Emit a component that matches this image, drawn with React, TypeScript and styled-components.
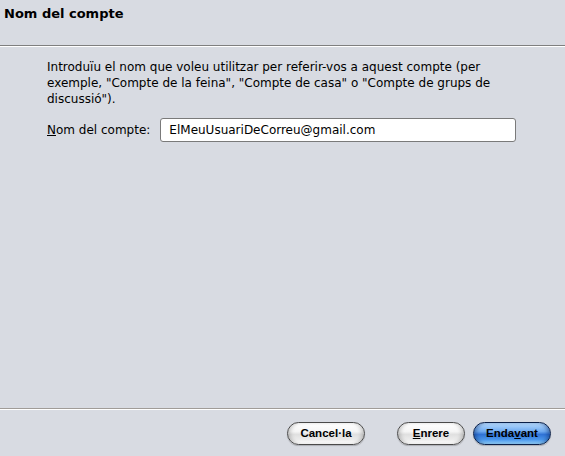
import React from "react";
import styled, { createGlobalStyle } from "styled-components";

const Global = createGlobalStyle`
  html, body { margin: 0; padding: 0; }
  body { background: #d8dbe2; font-family: "DejaVu Sans", "Verdana", sans-serif; }
`;

const Window = styled.div`
  width: 565px;
  height: 456px;
  display: flex;
  flex-direction: column;
  background: #d8dbe2;
  color: #000;
`;

const Header = styled.div`
  height: 46px;
  box-sizing: border-box;
  padding: 6px 0 0 4px;
  font-weight: bold;
  font-size: 13px;
  border-bottom: 1px solid #7f7f7f;
`;

const Sep = styled.div`
  height: 1px;
  background: #ffffff;
`;

const Body = styled.div`
  flex: 1;
  padding: 12px 47px 0 47px;
  font-size: 12px;
  line-height: 16px;
`;

const Para = styled.p`
  margin: 0;
`;

const Row = styled.div`
  display: flex;
  align-items: center;
  margin-top: 11px;
  gap: 10px;
`;

const Label = styled.label`
  font-size: 12px;
`;

const Field = styled.div`
  flex: 1;
  height: 24px;
  box-sizing: border-box;
  border: 1px solid #7a7a7a;
  border-radius: 3px;
  background: #fff;
  padding: 0 8px;
  display: flex;
  align-items: center;
  font-size: 12px;
  margin-right: 2px;
`;

const Footer = styled.div`
  border-top: 1px solid #a09c98;
`;

const ButtonBar = styled.div`
  border-top: 1px solid #fff;
  height: 46px;
  display: flex;
  align-items: center;
  justify-content: flex-end;
  padding: 0 14px 0 0;
`;

const Btn = styled.button<{ $primary?: boolean; $gap?: number; $w: number }>`
  font-family: "Liberation Sans", Arial, sans-serif;
  font-weight: bold;
  font-size: 11.5px;
  height: 23px;
  width: ${(p) => p.$w}px;
  padding: 0;
  border-radius: 12px;
  margin-left: ${(p) => p.$gap ?? 8}px;
  color: #000;
  border: 1px solid ${(p) => (p.$primary ? "#0a1f48" : "#4a4a4a")};
  background: ${(p) =>
    p.$primary
      ? "linear-gradient(to bottom, #b9dcff 0%, #6eaaf0 40%, #2f73d6 55%, #4b98ec 80%, #9ad8ff 100%)"
      : "linear-gradient(to bottom, #ffffff 0%, #f6f6f6 40%, #e0e0e0 55%, #ececec 80%, #ffffff 100%)"};
  box-shadow: inset 4px 0 4px -2px ${(p) => (p.$primary ? "rgba(10,40,100,0.5)" : "rgba(0,0,0,0.22)")},
    inset -4px 0 4px -2px ${(p) => (p.$primary ? "rgba(10,40,100,0.5)" : "rgba(0,0,0,0.22)")},
    0 1px 1px rgba(0,0,0,0.2);
`;

export default function App() {
  return (
    <Window>
      <Global />
      <Header>Nom del compte</Header>
      <Sep />
      <Body>
        <Para>
          Introduïu el nom que voleu utilitzar per referir-vos a aquest compte (per exemple, "Compte de la feina", "Compte de casa" o "Compte de grups de discussió").
        </Para>
        <Row>
          <Label><u>N</u>om del compte:</Label>
          <Field>ElMeuUsuariDeCorreu@gmail.com</Field>
        </Row>
      </Body>
      <Footer>
        <ButtonBar>
          <Btn $w={78}>Cancel·la</Btn>
          <Btn $w={68} $gap={32}><u>E</u>nrere</Btn>
          <Btn $w={78} $primary>Enda<u>v</u>ant</Btn>
        </ButtonBar>
      </Footer>
    </Window>
  );
}
